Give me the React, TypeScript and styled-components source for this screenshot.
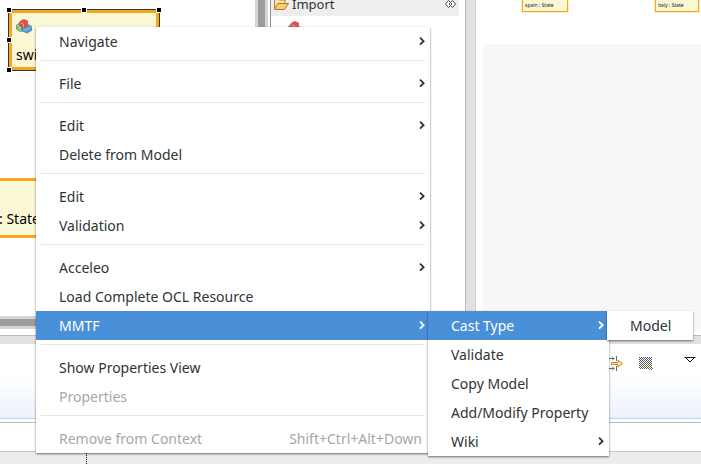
import React from "react";
import styled, { createGlobalStyle, css } from "styled-components";

const Global = createGlobalStyle`
  * { box-sizing: border-box; }
  body {
    margin: 0;
    background: #ededed;
    color: #2e3436;
    font: 14px/20px "Noto Sans", "Open Sans", sans-serif;
  }
  button { font: inherit; color: inherit; border: 0; background: none; padding: 0; }
`;

const Workbench = styled.div`
  position: relative;
  display: flex;
  flex-direction: column;
  min-height: 100vh;
  overflow: hidden;
`;

const Panes = styled.div`
  display: flex;
  flex: 1;
  background: #fff;
`;

const Editor = styled.section`
  display: flex;
  flex: 1;
  min-width: 0;
  padding-bottom: 6px;
`;

const CanvasColumn = styled.div`
  display: flex;
  flex: 1;
  min-width: 0;
  flex-direction: column;
`;

const Canvas = styled.div`
  position: relative;
  flex: 1;
  overflow: hidden;
`;

const Scrollbar = styled.div<{ $vertical?: boolean }>`
  flex: none;
  background: #9c9c9e;
  border: 0 solid #d5d5d5;
  ${(p) =>
    p.$vertical
      ? css`width: 13px; border-width: 0 3px;`
      : css`height: 13px; border-width: 3px 0;`}
`;

const StateNode = styled.div<{ $selected?: boolean }>`
  position: absolute;
  left: ${(p) => (p.$selected ? 8 : -60)}px;
  top: ${(p) => (p.$selected ? 9 : 178)}px;
  width: 152px;
  height: ${(p) => (p.$selected ? 62 : 60)}px;
  padding: ${(p) => (p.$selected ? "6px 4px" : "28px 0 0 56px")};
  border: 3px solid #f5a81c;
  background: #f9f7d4;
  color: #000;
  white-space: nowrap;
  ${(p) =>
    p.$selected &&
    css`
      border-width: 4px;
      outline: 1px solid #333;
      outline-offset: -1px;
    `}
`;

const NodeLabel = styled.div`
  margin-top: 6px;
`;

const Handle = styled.i<{ $x: number; $y: number }>`
  position: absolute;
  left: ${(p) => p.$x}px;
  top: ${(p) => p.$y}px;
  width: 6px;
  height: 6px;
  border: 1px solid #fff;
  background: #000;
`;

const Palette = styled.aside`
  width: 195px;
  margin-left: 2px;
  border-left: 1px solid #8b8b8b;
  padding-right: 6px;
`;

const PaletteHeader = styled.button`
  display: flex;
  width: 100%;
  height: 16px;
  padding: 0 3px 8px 2px;
  align-items: center;
  gap: 3px;
  background: #eeeeee;
  font-size: 13px;
  line-height: 10px;
`;

const PinIcon = styled.svg`
  margin-left: auto;
`;

const PaletteEntry = styled.div`
  padding: 5px 16px;
`;

const Sash = styled.div`
  width: 11px;
  background: #e1e1e1;
  border: solid #b5b9b9;
  border-width: 0 1px;
  border-right-color: #d2d2d2;
`;

const Outline = styled.section`
  display: flex;
  flex-direction: column;
  width: 225px;
  padding: 0 0 6px 7px;
`;

const OutlineDiagram = styled.div`
  position: relative;
  height: 44px;
`;

const MiniNode = styled.div<{ $x: number; $wide: number }>`
  position: absolute;
  left: ${(p) => p.$x}px;
  top: -10px;
  width: ${(p) => p.$wide}px;
  height: 22px;
  padding: 11px 0 0 2px;
  border: 1px solid #f5a81c;
  box-shadow: 0 0 0 1px #faebc0;
  background: #f9f7d4;
  color: #222;
  font: 5px/6px "Noto Sans", sans-serif;
  white-space: nowrap;
`;

const OutlineRest = styled.div`
  flex: 1;
  background: #f7f7f7;
`;

const BottomSash = styled.div`
  height: 9px;
  border-top: 1px solid #bdbdbd;
  background: #e1e1e1;
`;

const Toolbar = styled.div`
  display: flex;
  justify-content: flex-end;
  align-items: flex-start;
  height: 75px;
  padding: 12px 5px 0;
  border-bottom: 1px solid #bcd4ee;
  background: linear-gradient(#fff 45%, #ebf2fb);
`;

const ToolButton = styled.button<{ $gap?: number }>`
  display: block;
  margin-left: ${(p) => p.$gap ?? 0}px;
  line-height: 0;
`;

const TableHead = styled.div`
  height: 33px;
  border-top: 3px solid #fff;
  border-bottom: 1px solid #cacaca;
  background: #fff;
  &::before {
    content: "";
    display: block;
    border-top: 1px solid #bcbcbc;
  }
`;

const StatusBar = styled.footer`
  height: 12px;
  padding-left: 86px;
  &::before {
    content: "";
    display: block;
    width: 0;
    height: 100%;
    border-left: 1px dotted #111;
  }
`;

const MenuList = styled.ul<{ $width: number }>`
  margin: 0;
  padding: 0;
  min-width: ${(p) => p.$width}px;
  list-style: none;
  background: #fff;
  box-shadow: 0 1px 2px rgba(0, 0, 0, 0.55);
`;

const ContextMenu = styled.nav`
  position: absolute;
  left: 36px;
  top: 27px;
  z-index: 2;
`;

const Flyout = styled.div`
  position: absolute;
  left: calc(100% - 2px);
  top: 0;
  z-index: 1;
`;

const MenuItem = styled.li`
  position: relative;
`;

const MenuButton = styled.button<{ $active?: boolean }>`
  display: flex;
  align-items: center;
  justify-content: space-between;
  width: 100%;
  height: 29px;
  padding: 1px 5px 0 23px;
  text-align: left;
  white-space: nowrap;
  background: ${(p) => (p.$active ? "#4a90d9" : "transparent")};
  color: ${(p) => (p.$active ? "#fff" : "#2e3436")};
  &:disabled { color: #a6a7a8; }
`;

const Shortcut = styled.span`
  padding-right: 3px;
`;

const Divider = styled.li`
  height: 1px;
  margin: 4px 5px 8px;
  background: #e6e6e6;
`;

const Chevron = () => (
  <svg width="6" height="10" viewBox="0 0 6 10" fill="none" stroke="currentColor" strokeWidth="1.8">
    <path d="M1 .7 4.600 4.200 1 7.700" />
  </svg>
);

const ClassIcon = () => (
  <svg width="16" height="15" viewBox="0 0 16 15">
    <path d="M.5 6 3 4.500 6 5v7l-2 .5L.5 10z" fill="#7cc07c" stroke="#4b8c4e" strokeWidth=".7" />
    <path d="M1.500 6.500l2.500 1v4" fill="none" stroke="#c5e8c0" />
    <path d="M6 9l6-3.500L15.500 7.500v4L11 14l-5-2z" fill="#5c9bd0" stroke="#3973a8" strokeWidth=".7" />
    <path d="M7.500 10.500l3 .5 4.500-2.500" fill="none" stroke="#9dc8ea" />
    <path d="M3.500 3 5.500 1.500 8 .5l3.500 1.500v5L8.500 9l-5-2z" fill="#dc4f50" stroke="#c5474a" strokeWidth=".7" />
    <path d="M4.500 4l3 1v3" fill="none" stroke="#f0a09c" />
  </svg>
);

const FolderIcon = () => (
  <svg width="16" height="14" viewBox="0 0 16 14" fill="#fbe3a0" stroke="#b27a25">
    <path d="M1.500 11.500v-9l1-1h3l1 1.500h5.500v3" />
    <path d="M1.500 12.500 5 6.500h10.500l-4 6z" fill="#f8ce75" />
  </svg>
);

const MergeIcon = () => (
  <svg width="16" height="16" viewBox="0 0 16 16" fill="none" stroke="#606b80">
    <path d="M0 2.500h6M4 .5l2 2-2 2M8.500 0v5M0 12.500h6M4 10.500l2 2-2 2M8.500 10v5" />
    <path d="M3.500 6.500h6.500V4l4.500 3.500L10 11V8.500H3.500z" fill="#fce9a9" stroke="#c58a1c" />
  </svg>
);

const PinnedGridIcon = () => (
  <svg width="16" height="16" viewBox="0 0 16 16" shapeRendering="crispEdges">
    <defs>
      <pattern id="dither" width="2" height="2" patternUnits="userSpaceOnUse">
        <path d="M0 0h1v1H0zM1 1h1v1H1z" fill="#50545c" />
      </pattern>
      <pattern id="ditherGold" width="2" height="2" patternUnits="userSpaceOnUse">
        <path d="M0 0h1v1H0zM1 1h1v1H1z" fill="#8d6a28" />
      </pattern>
    </defs>
    <path d="M1 1h13v12H1z" fill="url(#dither)" />
    <path d="M7 10l3-3 5 4v3H10z" fill="#fff" />
    <path d="M7 10l3-3 5 4v3H10z" fill="url(#ditherGold)" />
  </svg>
);

const TriangleIcon = () => (
  <svg width="12" height="7" viewBox="0 0 12 7" fill="#fff" stroke="#111">
    <path d="M.5 1.500h11M1.500 1.500 6 6l4.500-4.500" />
  </svg>
);

interface Entry {
  label: string;
  shortcut?: string;
  disabled?: boolean;
  arrow?: boolean;
  children?: Entry[];
  width?: number;
}

const groups: Entry[][] = [
  [{ label: "Navigate", arrow: true }],
  [{ label: "File", arrow: true }],
  [{ label: "Edit", arrow: true }, { label: "Delete from Model" }],
  [{ label: "Edit", arrow: true }, { label: "Validation", arrow: true }],
  [
    { label: "Acceleo", arrow: true },
    { label: "Load Complete OCL Resource" },
    {
      label: "MMTF",
      arrow: true,
      width: 181,
      children: [
        { label: "Cast Type", arrow: true, width: 86, children: [{ label: "Model" }] },
        { label: "Validate" },
        { label: "Copy Model" },
        { label: "Add/Modify Property" },
        { label: "Wiki", arrow: true },
      ],
    },
  ],
  [{ label: "Show Properties View" }, { label: "Properties", disabled: true }],
  [{ label: "Remove from Context", shortcut: "Shift+Ctrl+Alt+Down", disabled: true }],
];

const Item = ({ entry }: { entry: Entry }) => (
  <MenuItem>
    <MenuButton $active={!!entry.children} disabled={entry.disabled}>
      <span>{entry.label}</span>
      {entry.arrow && <Chevron />}
      {entry.shortcut && <Shortcut>{entry.shortcut}</Shortcut>}
    </MenuButton>
    {entry.children && (
      <Flyout>
        <MenuList $width={entry.width ?? 0}>
          {entry.children.map((child) => (
            <Item key={child.label} entry={child} />
          ))}
        </MenuList>
      </Flyout>
    )}
  </MenuItem>
);

const handles = [
  [-6, -6], [69, -6], [144, -6],
  [-6, 24], [144, 24],
  [-6, 54], [69, 54], [144, 54],
];

export default function App() {
  return (
    <>
      <Global />
      <Workbench>
        <Panes>
          <Editor>
            <CanvasColumn>
              <Canvas>
                <StateNode $selected>
                  <ClassIcon />
                  <NodeLabel>swi</NodeLabel>
                  {handles.map(([x, y]) => (
                    <Handle key={`${x},${y}`} $x={x} $y={y} />
                  ))}
                </StateNode>
                <StateNode>: State</StateNode>
              </Canvas>
              <Scrollbar />
            </CanvasColumn>
            <Scrollbar $vertical />
            <Palette>
              <PaletteHeader>
                <FolderIcon />
                <span>Import</span>
                <PinIcon width="11" height="8" viewBox="0 0 11 8" fill="#fff" stroke="#444">
                  <path d="M3.500.5 0.500 4l3 3.500L5.500 5.500l2 2 3-3.500-3-3.500-2 2z" />
                  <path d="M5.500 2.500 4 4l1.500 1.500L7 4z" />
                </PinIcon>
              </PaletteHeader>
              <PaletteEntry>
                <ClassIcon />
              </PaletteEntry>
            </Palette>
          </Editor>
          <Sash />
          <Outline>
            <OutlineDiagram>
              <MiniNode $x={39} $wide={46}>spain : State</MiniNode>
              <MiniNode $x={172} $wide={44}>italy : State</MiniNode>
            </OutlineDiagram>
            <OutlineRest />
          </Outline>
        </Panes>
        <BottomSash />
        <Toolbar>
          <ToolButton aria-label="Merge"><MergeIcon /></ToolButton>
          <ToolButton aria-label="Pin" $gap={14}><PinnedGridIcon /></ToolButton>
          <ToolButton aria-label="View menu" $gap={30}><TriangleIcon /></ToolButton>
        </Toolbar>
        <TableHead />
        <StatusBar />
        <ContextMenu>
          <MenuList $width={394}>
            {groups.map((group, index) => (
              <React.Fragment key={index}>
                {index > 0 && <Divider />}
                {group.map((entry) => (
                  <Item key={entry.label} entry={entry} />
                ))}
              </React.Fragment>
            ))}
          </MenuList>
        </ContextMenu>
      </Workbench>
    </>
  );
}
